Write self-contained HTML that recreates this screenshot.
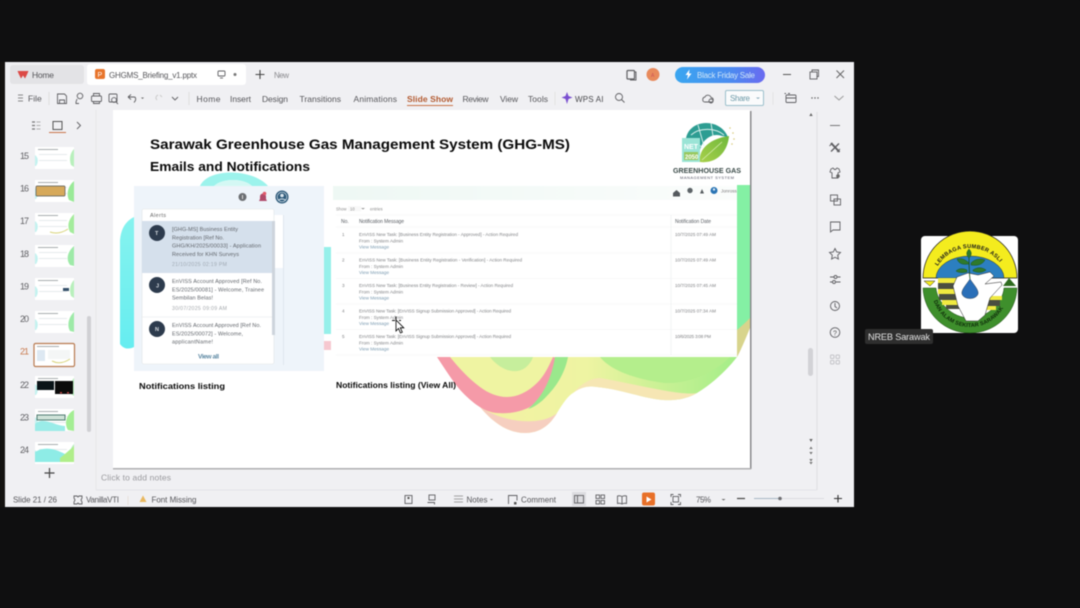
<!DOCTYPE html>
<html><head><meta charset="utf-8"><style>
html,body{margin:0;padding:0;background:#0f0f10;width:1080px;height:608px;overflow:hidden}
svg{display:block;filter:blur(.4px)}
text{font-family:"Liberation Sans",sans-serif;white-space:pre}
.t{font-size:8.500px;fill:#56565a}
.g{font-size:4.600px;fill:#808285}
.l{font-size:4.600px;fill:#7a9ab0}
.b{font-weight:bold;fill:#0a0a0a}
.i{fill:none;stroke:#5f5f63;stroke-width:.9}
.n{font-size:9px;fill:#606064}
</style></head><body>
<svg width="1080" height="608" viewBox="0 0 1080 608" xmlns="http://www.w3.org/2000/svg">
<defs>
<linearGradient id="btn" x1="0" x2="1"><stop offset="0" stop-color="#3aa6f0"/><stop offset=".6" stop-color="#4a8cf0"/><stop offset="1" stop-color="#6a6af0"/></linearGradient>
<linearGradient id="w1" x1="0" x2="1" y1="0" y2="0"><stop offset="0" stop-color="#f6f1a4"/><stop offset=".5" stop-color="#eef4a2"/><stop offset="1" stop-color="#a4ee88"/></linearGradient>
<linearGradient id="cy" x1="0" x2="0" y1="0" y2="1"><stop offset="0" stop-color="#86f3ef"/><stop offset="1" stop-color="#66edf0"/></linearGradient>
<linearGradient id="leaf" x1="0" x2="1" y1="1" y2="0"><stop offset="0" stop-color="#a8d04a"/><stop offset="1" stop-color="#6fb83c"/></linearGradient>
<linearGradient id="hb" x1="0" x2="1"><stop offset="0" stop-color="#eef8f4"/><stop offset="1" stop-color="#fbfdfc"/></linearGradient>
<g id="th">
<rect x="0" y="0" width="39" height="22" fill="#fff"/>
<path d="M39 2C35 6 34 12 36 18L39 20Z" fill="#b8f0bc"/>
<path d="M0 8C3 10 4 15 1 19L0 19Z" fill="#c4f2f0"/>
<rect x="3" y="2" width="20" height="1" fill="#a8acae"/>
<rect x="4" y="7" width="28" height="1" fill="#e6eaec"/><rect x="4" y="13" width="28" height="1" fill="#e6eaec"/>
</g>
<path id="arcT" d="M932 286A38 38 0 0 1 1008 286"/>
<path id="arcB" d="M932 290A38 37 0 0 0 1008 290"/>
</defs>

<rect width="1080" height="608" fill="#0f0f10"/>
<rect x="5" y="62" width="849" height="445" fill="#f0f0f3"/>
<rect x="0" y="62" width="5" height="445" fill="#141210"/>

<!-- tabs -->
<rect x="10" y="65" width="74" height="19" rx="3" fill="#e3e3e6"/>
<path d="M17.500 71h11l-1.500 3.500-2 4-2-3-2 3-2-4z" fill="#dc4a46"/>
<text x="32" y="78" class="t" textLength="22">Home</text>
<rect x="87" y="64" width="159" height="21" rx="3" fill="#fff"/>
<rect x="95" y="69" width="10" height="10" rx="2" fill="#e8752c"/>
<text x="97.500" y="77" style="font-size:7px;fill:#fff">P</text>
<text x="109" y="78" class="t" style="font-size:8px" textLength="88">GHGMS_Briefing_v1.pptx</text>
<rect x="218" y="71" width="7" height="5" rx="1" class="i"/>
<path d="M220 78h3" class="i"/>
<circle cx="235" cy="74.500" r="1.500" fill="#777"/>
<path d="M260 70v9M255.500 74.500h9" stroke="#444" stroke-width="1.100"/>
<text x="274" y="78" style="font-size:8px;fill:#8a8a8e" textLength="15">New</text>

<!-- right title -->
<rect x="627" y="70.500" width="7.500" height="8.500" rx="1" class="i" style="stroke-width:1.200"/><path d="M634.500 72h1.500v8h-6" class="i"/>
<circle cx="653" cy="74.500" r="6.500" fill="#e88a5c"/>
<text x="651" y="77" style="font-size:5px;fill:#c55">A</text>
<rect x="675" y="67" width="90" height="16" rx="8" fill="url(#btn)"/>
<path d="M689.500 69.500l-4 5.500h2.500l-1 4.500 4.500-6h-2.500z" fill="#fff"/>
<text x="697" y="78" style="font-size:8px;fill:#cfe6f8" textLength="58">Black Friday Sale</text>
<path d="M783 74.500h8" stroke="#555"/>
<rect x="810" y="72" width="7" height="7" class="i"/><path d="M812 72v-2h6.500v6.500h-1.500" class="i"/>
<path d="M836.500 70.500l7.500 7.500M844 70.500l-7.500 7.500" stroke="#666"/>

<!-- toolbar -->
<path d="M18 95h5M18 98h5M18 101h5" stroke="#888" stroke-width=".9"/>
<text x="28" y="101.500" class="t">File</text>
<path d="M49 92v13" stroke="#ddd"/>
<path d="M57.500 94h7l2 2v7.500h-9z" class="i"/><path d="M59.500 103v-3h5v3" class="i"/>
<circle cx="80" cy="96" r="2.800" class="i"/><path d="M77 99l-1 3v1.500h3" class="i"/>
<rect x="91.500" y="96" width="10" height="5.500" rx="1" class="i"/><path d="M93.500 96v-2.500h6v2.500M93.500 101v2.500h6v-2.500" class="i"/>
<rect x="109" y="94" width="8" height="8" rx="1" class="i"/><circle cx="114" cy="100" r="2.400" class="i"/><path d="M116 102l2 2" class="i"/>
<path d="M128 97l3-2.500M128 97l3 2.500M128 97h6c2 0 2.500 3 0 5.500" class="i"/>
<path d="M141 97.500l1.500 1.500 1.500-1.500" fill="#666"/>
<path d="M158 95c-2 1-3 3-1 5" stroke="#ccc" fill="none"/><path d="M160 95l2 2" stroke="#ccc"/>
<path d="M172 97l3 3 3-3" class="i"/>
<path d="M189 92v13" stroke="#ddd"/>
<text x="196.500" y="102" class="t" textLength="24">Home</text>
<text x="230" y="102" class="t" textLength="21">Insert</text>
<text x="262" y="102" class="t" textLength="26">Design</text>
<text x="299.500" y="102" class="t" textLength="41.500">Transitions</text>
<text x="353.500" y="102" class="t" textLength="43.500">Animations</text>
<text x="407" y="102" style="font-size:8.500px;font-weight:bold;fill:#b35a30" textLength="46">Slide Show</text>
<rect x="407" y="105" width="46" height="1" fill="#c9744a"/>
<text x="462.500" y="102" class="t" textLength="26">Review</text>
<text x="500" y="102" class="t" textLength="18">View</text>
<text x="528" y="102" class="t" textLength="20">Tools</text>
<path d="M555 92v13" stroke="#e2e2e2"/>
<path d="M567 92l1.500 4 4 1.500-4 1.500-1.500 5-1.500-5-4-1.500 4-1.500z" fill="#7a4fd0"/>
<text x="575" y="102" class="t" style="font-size:8px;fill:#48484c" textLength="28.500">WPS AI</text>
<circle cx="619" cy="97" r="3.500" class="i"/><path d="M621.500 99.500l3 3" class="i"/>
<path d="M705 102h6c3 0 3-4 0-4.500-1-3-5-3-6-.5-3 .5-3 5 0 5z" class="i"/><circle cx="711" cy="101" r="2" class="i"/>
<rect x="725.500" y="90.500" width="38" height="15" rx="1.500" fill="#fafbfc" stroke="#9cc0cc"/>
<text x="730" y="101" style="font-size:8px;fill:#6d9aa8" textLength="20">Share</text>
<path d="M756 97.500l2 1.500 2-1.500" fill="#8ab"/>
<path d="M773 92v13" stroke="#e4e4e4"/>
<rect x="786" y="95" width="10" height="7.500" rx="1" class="i"/><path d="M786 93.500h-1.500M786 98h10M788 93.500l2 0" class="i"/>
<circle cx="812" cy="98" r=".7" fill="#555"/><circle cx="815" cy="98" r=".7" fill="#555"/><circle cx="818" cy="98" r=".7" fill="#555"/>
<path d="M834.500 96l4.500 4 4.500-4" fill="none" stroke="#999"/>

<!-- side separators -->
<path d="M96 110V490" stroke="#e6e6e9"/>
<path d="M817 112V490" stroke="#dedee2"/>
<path d="M96 490H817" stroke="#e4e4e7"/>

<!-- left pane header -->
<path d="M32 122h3M32 125.500h3M32 129h3" stroke="#777" stroke-width="1.200"/>
<path d="M36.500 122h4M36.500 125.500h4M36.500 129h4" stroke="#999" stroke-width=".7"/>
<rect x="53" y="121.500" width="9" height="8" fill="none" stroke="#555"/>
<rect x="49" y="132" width="17" height="1" fill="#c9744a"/>
<path d="M77 122l3.500 3.500-3.500 3.500" class="i"/>

<!-- thumbnails -->
<text x="20" y="159" class="n" textLength="9">15</text>
<text x="20" y="191.500" class="n" textLength="9">16</text>
<text x="20" y="224" class="n" textLength="9">17</text>
<text x="20" y="257" class="n" textLength="9">18</text>
<text x="20" y="289.500" class="n" textLength="9">19</text>
<text x="20" y="322" class="n" textLength="9">20</text>
<text x="20" y="354.500" style="font-size:9px;fill:#c97a4e" textLength="9">21</text>
<text x="20" y="388" class="n" textLength="9">22</text>
<text x="20" y="420.500" class="n" textLength="9">23</text>
<text x="20" y="453" class="n" textLength="9">24</text>
<use href="#th" x="35" y="147"/>
<use href="#th" x="35" y="180"/>
<rect x="36" y="186" width="29" height="10" rx="1" fill="#d6a95a" stroke="#555" stroke-width=".7"/>
<path d="M74 181C68 186 66 194 69 200L74 202Z" fill="#9aea98"/>
<use href="#th" x="35" y="213"/><path d="M74 214C68 220 67 226 70 232L74 234Z" fill="#a4ec9c"/>
<path d="M50 232c6 2 12 1 18-3" stroke="#d8d47a" fill="none"/>
<use href="#th" x="35" y="245"/><path d="M74 246C67 252 66 260 70 265L74 266Z" fill="#9eeaa8"/>
<use href="#th" x="35" y="278"/><rect x="63" y="288" width="6" height="3" fill="#35506a"/>
<use href="#th" x="35" y="311"/><path d="M74 312C68 318 67 326 70 331L74 332Z" fill="#9eeaa8"/>
<rect x="34" y="343.500" width="40.500" height="23" rx="1.500" fill="#fff" stroke="#b87a50" stroke-width="1.200"/>
<rect x="37" y="350" width="8" height="11" fill="#dde8f2"/><rect x="37" y="346" width="22" height="1" fill="#a8acae"/>
<rect x="48" y="350" width="22" height="9" fill="#f4f6f6"/><path d="M52 361c6 3 12 2 18-2" stroke="#d8d47a" fill="none"/>
<use href="#th" x="35" y="376"/>
<rect x="37" y="381" width="17" height="9" fill="#0a1418"/><rect x="55" y="381" width="18" height="13" fill="#0b0b0b"/>
<rect x="60" y="392" width="2" height="1.500" fill="#b44"/><rect x="67" y="392" width="2" height="1.500" fill="#b44"/>
<use href="#th" x="35" y="409"/>
<path d="M74 410C66 414 64 424 68 430L74 431Z" fill="#a4ee94"/>
<path d="M35 424c8-8 20 2 30 2v5H35z" fill="#9aece8"/>
<rect x="37" y="415" width="28" height="5" fill="#cfe3d8" stroke="#4e7a70"/>
<use href="#th" x="35" y="442"/><path d="M35 452c10-6 20-3 30 2l9-8v16H35z" fill="#8eece6"/><path d="M60 458c5-4 10-8 14-12v16H60z" fill="#b0ee8a"/>
<rect x="87" y="316" width="4" height="116" rx="2" fill="#d0d0d4"/>
<path d="M49.500 468v10M44.500 473h10" stroke="#444" stroke-width="1.200"/>

<!-- SLIDE -->
<rect x="750" y="111" width="1.500" height="358" fill="#8a8a8c"/>
<rect x="113" y="468" width="638" height="1.500" fill="#b0b0b2"/>
<rect x="113" y="110" width="637" height="358" fill="#fff"/>
<!-- cyan blobs -->
<path d="M200 186C208 168 252 168 268 186H252C244 178 222 178 214 186Z" fill="#9cf3ec"/>
<path d="M214 186C222 178 244 178 252 186Z" fill="#d4f8f4"/>
<path d="M134 217C126 221 121 228 120 240L120 344C124 350 130 349 134 347Z" fill="url(#cy)"/>
<rect x="324" y="247" width="7" height="87" fill="#96f0ea"/>
<rect x="324" y="341" width="7" height="9" fill="#f6c8d0"/>
<!-- wave -->
<path d="M437 357C455 380 470 395 480 407C495 425 510 433 525 433C540 433 550 425 557 413C563 403 568 396 573 393C582 386 590 386 597 387C620 389 642 398 663 400C680 401 690 397 697 393C712 384 727 370 737 357Z" fill="url(#w1)"/>
<path d="M450 357C458 367 468 378 480 387C488 393 497 397 507 397C517 397 528 392 537 383C544 376 548 368 553 357Z" fill="#eff4a2"/>
<path d="M490 357C500 370 515 375 525 368C530 364 532 360 533 357Z" fill="#c6ee9c"/>
<path d="M437 357C447 372 455 385 463 393C475 405 485 412 497 413C512 414 522 411 530 407C542 399 552 380 557 358L553 357C548 368 544 376 537 383C528 392 517 397 507 397C497 397 488 393 480 387C468 378 458 367 450 357Z" fill="#f59aa8"/>
<path d="M480 407C495 425 510 433 525 433C540 433 550 425 557 413C545 424 510 426 480 407Z" fill="#f6cfc0"/>
<path d="M555 357H568C565 372 558 385 545 398C538 405 532 408 528 409C545 395 552 375 555 357Z" fill="#9ae88c"/>
<path d="M600 357C612 372 640 380 665 383C690 384 715 372 730 357Z" fill="#b4ee8c"/>
<path d="M573 393C582 386 590 386 597 387C620 389 642 398 663 400C680 401 690 397 697 393C680 396 640 385 600 378C590 378 580 385 573 393Z" fill="#f6e6b4"/>
<path d="M737 185H750V325C745 338 741 348 737 357Z" fill="#84f0a4"/>
<path d="M737 330C743 325 748 320 750 318V328C745 340 741 350 737 357Z" fill="#d8d48c"/>

<!-- Title -->
<text x="150" y="149" class="b" style="font-size:14px" textLength="420" lengthAdjust="spacingAndGlyphs">Sarawak Greenhouse Gas Management System (GHG-MS)</text>
<text x="150" y="171" class="b" style="font-size:13px" textLength="160" lengthAdjust="spacingAndGlyphs">Emails and Notifications</text>

<!-- green logo -->
<path d="M688 150C681 135 692 123 706 123C716 123 724 128 728 137L722 136C712 132 702 140 700 150Z" fill="#2d9d92"/>
<path d="M691 135C700 127 716 128 724 135M698 125L704 146M711 123L713 136M685 142C692 138 698 142 702 148" stroke="#dff2ee" stroke-width=".9" fill="none"/>
<rect x="682" y="138" width="18" height="24" fill="#9be4d6"/>
<text x="684" y="149" style="font-size:7px;font-weight:bold;fill:#fff">NET</text>
<rect x="684" y="152" width="14" height="8" fill="#98c860"/>
<text x="685" y="159" style="font-size:6px;font-weight:bold;fill:#fff">2050</text>
<path d="M700 162C698 148 712 138 729 136C728 150 718 164 700 162Z" fill="url(#leaf)"/>
<path d="M702 160L722 142" stroke="#d6ecb0" stroke-width=".8"/>
<circle cx="730" cy="128" r=".8" fill="#d8c87a"/><circle cx="733" cy="133" r=".8" fill="#d8c87a"/><circle cx="734" cy="139" r=".8" fill="#d8c87a"/><circle cx="732" cy="144" r=".8" fill="#d8c87a"/>
<text x="673" y="173" style="font-size:7px;font-weight:bold;fill:#3a4a48" textLength="68" lengthAdjust="spacingAndGlyphs">GREENHOUSE GAS</text>
<text x="680" y="179" style="font-size:4px;fill:#556" textLength="54">MANAGEMENT SYSTEM</text>

<!-- left panel -->
<rect x="134" y="186" width="190" height="185" fill="#eef4fa"/>
<rect x="283" y="215" width="1" height="150" fill="#dfe6ee"/>
<circle cx="242.500" cy="197" r="4" fill="#6c6f73"/><rect x="242" y="195" width="1" height="4" fill="#ddd"/>
<path d="M259 201l1-2v-2.500a3 3 0 0 1 6 0V199l1 2z" fill="#b04a6a"/><circle cx="264.500" cy="193.500" r="1.800" fill="#e0586a"/>
<circle cx="282" cy="197" r="6.500" fill="#2d5a7a"/><circle cx="282" cy="197" r="4.800" fill="none" stroke="#dbe6ee" stroke-width=".7"/><circle cx="282" cy="195.500" r="1.800" fill="#dbe6ee"/><path d="M278.500 200.500c1-2 6-2 7 0" stroke="#dbe6ee" fill="none"/>
<rect x="274" y="215" width="9" height="53" fill="#fff"/>
<rect x="142" y="209" width="132" height="155" rx="2" fill="#fff" stroke="#e2e4e6" stroke-width=".6"/>
<text x="150" y="217" style="font-size:5.500px;fill:#666" textLength="16">Alerts</text>
<rect x="142" y="221" width="130" height="52" fill="#d5e0ec"/>
<rect x="272" y="221" width="3" height="114" fill="#cdd4dc"/>
<path d="M142 317H272" stroke="#e4e6e8" stroke-width=".6"/>
<circle cx="157" cy="233" r="8" fill="#2d3b4d"/><text x="155" y="235" style="font-size:5.500px;font-weight:bold;fill:#d8dde2">T</text>
<circle cx="157" cy="285" r="8" fill="#2d3b4d"/><text x="156" y="287.500" style="font-size:5.500px;font-weight:bold;fill:#d8dde2">J</text>
<circle cx="157" cy="329" r="8" fill="#2d3b4d"/><text x="155" y="331" style="font-size:5.500px;font-weight:bold;fill:#d8dde2">N</text>
<g style="font-size:5.500px;fill:#62666c">
<text x="172" y="231" textLength="66">[GHG-MS] Business Entity</text>
<text x="172" y="239.500" textLength="52">Registration [Ref No.</text>
<text x="172" y="247.500" textLength="89">GHG/KH/2025/00033] - Application</text>
<text x="172" y="256" textLength="67">Received for KHN Surveys</text>
<text x="172" y="283" textLength="90">EnVISS Account Approved [Ref No.</text>
<text x="172" y="291.500" textLength="92">ES/2025/00081] - Welcome, Trainee</text>
<text x="172" y="299.500" textLength="41">Sembilan Belas!</text>
<text x="172" y="327" textLength="89">EnVISS Account Approved [Ref No.</text>
<text x="172" y="335.500" textLength="71">ES/2025/00072] - Welcome,</text>
<text x="172" y="343.500" textLength="41">applicantName!</text>
</g>
<text x="172" y="266" style="font-size:5.200px;fill:#a0aab4" textLength="55">21/10/2025 02:19 PM</text>
<text x="172" y="310" style="font-size:5.200px;fill:#a6aaae" textLength="55">30/07/2025 09:09 AM</text>
<text x="198" y="358.500" style="font-size:6.500px;font-weight:bold;fill:#5f8aa4" textLength="21">View all</text>
<text x="139" y="389" class="b" style="font-size:8.500px" textLength="86" lengthAdjust="spacingAndGlyphs">Notifications listing</text>

<!-- right panel -->
<rect x="331" y="186" width="406" height="171" fill="#fff"/>
<rect x="333" y="186" width="404" height="14" fill="url(#hb)"/>
<path d="M673 193l3.500-3 3.500 3v3.500h-7z" fill="#555a5e"/>
<circle cx="690" cy="190.500" r="2.700" fill="#5d6468"/>
<path d="M700 193.500l2-4.500 2 4.500z" fill="#555a5e"/>
<circle cx="714" cy="190.500" r="3.500" fill="#2a74b4"/><circle cx="714" cy="189.500" r="1.200" fill="#dbe9f4"/>
<text x="721" y="192.500" style="font-size:4.500px;fill:#777">Jonross</text>
<text x="336" y="210.500" style="font-size:4.200px;fill:#8c8c8c">Show</text>
<rect x="348" y="206" width="13" height="5.500" fill="#f8f8f8"/>
<text x="350" y="210.500" style="font-size:4.200px;fill:#8c8c8c">10</text><path d="M361 208l2 1.500 2-1.500" fill="#999"/>
<text x="370" y="210.500" style="font-size:4.200px;fill:#8c8c8c">entries</text>
<path d="M336 215H737M336 227H737M336 253H737M336 278.500H737M336 304H737M336 329.500H737M336 355H737" stroke="#f1f3f4" stroke-width=".6"/>
<path d="M671 215V355" stroke="#eaecee" stroke-width=".6"/>
<g style="font-size:5px;fill:#5c6066">
<text x="341" y="223">No.</text>
<text x="359" y="223" textLength="45">Notification Message</text>
<text x="675" y="223" textLength="36">Notification Date</text>
</g>
<text x="342" y="236" class="g">1</text>
<text x="359" y="236" class="g" textLength="159">EnVISS New Task: [Business Entity Registration - Approved] - Action Required</text>
<text x="359" y="242.500" class="g" textLength="44">From : System Admin</text>
<text x="359" y="248.500" class="l" textLength="30">View Message</text>
<text x="675" y="236" class="g" textLength="41">10/7/2025 07:49 AM</text>
<text x="342" y="261.500" class="g">2</text>
<text x="359" y="261.500" class="g" textLength="163">EnVISS New Task: [Business Entity Registration - Verification] - Action Required</text>
<text x="359" y="268" class="g" textLength="44">From : System Admin</text>
<text x="359" y="274" class="l" textLength="30">View Message</text>
<text x="675" y="261.500" class="g" textLength="41">10/7/2025 07:49 AM</text>
<text x="342" y="287" class="g">3</text>
<text x="359" y="287" class="g" textLength="154">EnVISS New Task: [Business Entity Registration - Review] - Action Required</text>
<text x="359" y="293.500" class="g" textLength="44">From : System Admin</text>
<text x="359" y="299.500" class="l" textLength="30">View Message</text>
<text x="675" y="287" class="g" textLength="41">10/7/2025 07:45 AM</text>
<text x="342" y="312.500" class="g">4</text>
<text x="359" y="312.500" class="g" textLength="152">EnVISS New Task: [EnVISS Signup Submission Approved] - Action Required</text>
<text x="359" y="319" class="g" textLength="44">From : System Admin</text>
<text x="359" y="325" class="l" textLength="30">View Message</text>
<text x="675" y="312.500" class="g" textLength="41">10/7/2025 07:34 AM</text>
<text x="342" y="338" class="g">5</text>
<text x="359" y="338" class="g" textLength="152">EnVISS New Task: [EnVISS Signup Submission Approved] - Action Required</text>
<text x="359" y="344.500" class="g" textLength="44">From : System Admin</text>
<text x="359" y="350.500" class="l" textLength="30">View Message</text>
<text x="675" y="338" class="g" textLength="36">10/6/2025 3:08 PM</text>
<text x="336" y="388" class="b" style="font-size:8.500px" textLength="120" lengthAdjust="spacingAndGlyphs">Notifications listing (View All)</text>

<!-- cursor -->
<path d="M396 320v11l2.500-2.500 2 4.500 1.800-.8-2-4.400h3.500z" fill="#fff" stroke="#000" stroke-width=".8"/>
<path d="M396 316.500v3M392 320.500h3M399 320.500h2" stroke="#111" stroke-width="1"/>

<!-- right scroll -->
<path d="M811 113l-1.700 3h3.400z" fill="#666"/>
<rect x="808" y="348" width="5" height="28" rx="2.500" fill="#d2d2d6"/>
<path d="M809.300 439h3.400l-1.700 3z" fill="#666"/>
<path d="M809.300 449h3.400l-1.700-2.500zM809.300 452h3.400l-1.700 2.500z" fill="#777"/>
<path d="M809.300 459h3.400l-1.700 2.500zM809.300 462h3.400l-1.700 2.500z" fill="#777"/>

<!-- right rail icons -->
<path d="M830 125.500h10" stroke="#777"/>
<path d="M831 143l8.500 9" class="i" style="stroke-width:2"/><path d="M839 143.500l-8 8" class="i" style="stroke-width:1.300"/><path d="M829.500 146l3-3M837 152l3-3" class="i"/>
<path d="M831 169l2-1 1.500 1.500h1l1.500-1.500 2 1 1 3-2 .8V178h-6v-5.200l-2-.8z" class="i"/><circle cx="838" cy="176" r="1.800" fill="#666"/>
<rect x="830.500" y="195" width="7" height="6" class="i"/><rect x="834" y="199" width="6.500" height="6" class="i"/>
<path d="M830.500 222h9.500v8h-7l-2.500 2z" class="i"/>
<path d="M835 248.500l1.700 3.500 3.800.5-2.800 2.700.7 3.800-3.400-1.800-3.400 1.800.7-3.800-2.800-2.700 3.800-.5z" class="i"/>
<path d="M830 277h4M837.500 277h3M830 282h2M836 282h4.500" class="i"/><circle cx="835.500" cy="277" r="1.500" class="i"/><circle cx="834" cy="282" r="1.500" class="i"/>
<circle cx="835" cy="306" r="4.500" class="i"/><path d="M835 303v3.500l2 1.500" class="i"/>
<circle cx="835" cy="332.500" r="4.800" class="i"/>
<text x="833" y="335.500" style="font-size:7px;fill:#555">?</text>
<g fill="none" stroke="#c4c4c8"><rect x="830.500" y="355" width="3.500" height="3.500" rx="1"/><rect x="836" y="355" width="3.500" height="3.500" rx="1"/><rect x="830.500" y="360.500" width="3.500" height="3.500" rx="1"/><rect x="836" y="360.500" width="3.500" height="3.500" rx="1"/></g>

<!-- notes -->
<text x="101" y="480.500" style="font-size:8.500px;fill:#9a9a9e" textLength="70">Click to add notes</text>

<!-- status bar -->
<text x="13" y="502.500" class="t" style="font-size:8px" textLength="44">Slide 21 / 26</text>
<path d="M74 496h3l1 1 1-1h3v2l-1 2 1 2v2h-3l-1-1-1 1h-3v-2l1-2-1-2z" class="i"/>
<text x="86" y="502.500" class="t" style="font-size:8px" textLength="33">VanillaVTI</text>
<path d="M128 496v9" stroke="#e8e0dc"/>
<path d="M143 495.500l3.500 6.500h-7z" fill="#e8b860"/>
<text x="151.500" y="502.500" class="t" style="font-size:8px" textLength="45">Font Missing</text>
<rect x="405" y="495.500" width="7" height="8" class="i"/><rect x="407.500" y="497" width="2" height="2" fill="#555"/>
<rect x="429" y="495" width="6" height="5" class="i"/><path d="M427.500 502.500h7v2" class="i"/>
<path d="M454 496h9M454 499h9M454 502h9" stroke="#888" stroke-width=".8"/>
<text x="466.500" y="502.500" class="t" style="font-size:8px" textLength="21">Notes</text>
<path d="M490 499l1.500 1.500 1.500-1.500" fill="#666"/>
<path d="M508.500 504v-8.500h8.500v5" class="i"/><rect x="514" y="502" width="2.500" height="2.500" fill="#555"/>
<text x="521" y="502.500" class="t" style="font-size:8px" textLength="35">Comment</text>
<rect x="572" y="492" width="14" height="14" fill="#dcdce0"/>
<rect x="574.500" y="495.500" width="9" height="7.500" class="i"/><path d="M577.500 495.500v7.500" class="i"/>
<g class="i"><rect x="596" y="495" width="3.500" height="3.500"/><rect x="601" y="495" width="3.500" height="3.500"/><rect x="596" y="500.500" width="3.500" height="3.500"/><rect x="601" y="500.500" width="3.500" height="3.500"/></g>
<path d="M622 496.500c-2-1-3-1-4.500-.5v7.500c1.500-.5 2.500-.5 4.500.5 2-1 3-1 4.500-.5V496c-1.500-.5-2.500-.5-4.500.5zM622 496.500v8" class="i"/>
<rect x="642" y="492.500" width="13" height="13" rx="2" fill="#e87028"/>
<path d="M646.500 496.500v6l5-3z" fill="#fff"/>
<path d="M671 497v-2.500h2.500M678 494.500h2.500v2.500M680.500 502v2.500H678M673.500 504.500H671V502" class="i"/><rect x="673" y="496.500" width="5.500" height="5.500" class="i"/>
<text x="696" y="502.500" class="t" style="font-size:8px" textLength="15">75%</text>
<path d="M721.500 499l2 1.500 2-1.500" fill="#666"/>
<path d="M737 498.500h8" stroke="#444" stroke-width="1.200"/>
<path d="M754 498.500h26" stroke="#a8b8c4"/><path d="M780 498.500h44" stroke="#dcdce0"/>
<circle cx="780" cy="498.500" r="1.800" fill="#6f6f73"/>
<path d="M838 495v7.500M834 498.500h8" stroke="#333" stroke-width="1.100"/>

<!-- Emblem tile -->
<rect x="921" y="236" width="97" height="97" rx="4" fill="#fff"/>
<!-- yellow arch -->
<path d="M923 278A47 47 0 0 1 1017 278L1005 278H935Z" fill="#f4ec1e" stroke="#1a1a1a" stroke-width=".7"/>
<!-- blue dome -->
<path d="M936 278A34 22 0 0 1 1004 278Z" fill="#2c7fc0" stroke="#1a1a1a" stroke-width=".4"/>
<!-- triangles -->
<path d="M924 281h11l-5 5z" fill="#f4ec1e" stroke="#222" stroke-width=".5"/>
<path d="M1003 286l6-8 7 8z" fill="#2d6a1e"/>
<!-- green lower ring -->
<path d="M923 288H936C937 302 952 318 970 318C988 318 1003 302 1004 288H1017C1016 314 995 333 970 333C945 333 924 314 923 288Z" fill="#3e8f2c" stroke="#1c4a14" stroke-width=".5"/>
<!-- stripes -->
<g fill="#f0ea40"><rect x="938" y="278" width="20" height="5"/><rect x="938" y="289" width="18" height="5"/><rect x="942" y="300" width="16" height="5"/><rect x="986" y="296" width="16" height="4"/><rect x="982" y="306" width="14" height="4"/></g>
<g fill="#4a4e40"><rect x="938" y="283" width="18" height="6"/><rect x="939" y="294" width="18" height="6"/><rect x="946" y="305" width="14" height="4"/><rect x="986" y="300" width="14" height="6"/></g>
<!-- hand -->
<path d="M953 286L957 277L968 273L978 275L990 272L994 276L985 284L1001 282L1002 285L990 298L985 315L978 321L966 321L958 306Z" fill="#fff" stroke="#222" stroke-width=".5"/>
<path d="M970 279C966 285 961 290 962 294C964 300 976 300 978 294C979 290 974 285 970 279Z" fill="#2a6fb8" stroke="#123" stroke-width=".4"/>
<!-- leaves -->
<path d="M970 279c-1-8-1-16-1-24" stroke="#174a14" fill="none" stroke-width=".8"/>
<path d="M969 263c-4-4-8-5-12-4 2 5 6 6 12 5zM971 263c4-4 9-5 14-3-3 5-8 6-14 5zM969 258c-3-3-3-6 0-9 3 3 3 6 0 9zM967 270c-4-2-8-2-11 1 3 2 7 2 11 1zM973 270c4-3 9-3 13 0-4 3-8 3-13 1z" fill="#2f7a2c" stroke="#174a14" stroke-width=".4"/>
<text style="font-size:5.600px;font-weight:bold;fill:#1a1a1a;letter-spacing:.25px"><textPath href="#arcT" startOffset="21">LEMBAGA SUMBER ASLI</textPath></text>
<text style="font-size:5.600px;font-weight:bold;fill:#0e2a0a;letter-spacing:.1px"><textPath href="#arcB" startOffset="11">DAN ALAM SEKITAR SARAWAK</textPath></text>

<rect x="865" y="329" width="68" height="15" rx="2" fill="#2e2e2e"/>
<text x="868" y="340" style="font-size:9.200px;fill:#e2e2e2" textLength="62">NREB Sarawak</text>
</svg>
</body></html>
